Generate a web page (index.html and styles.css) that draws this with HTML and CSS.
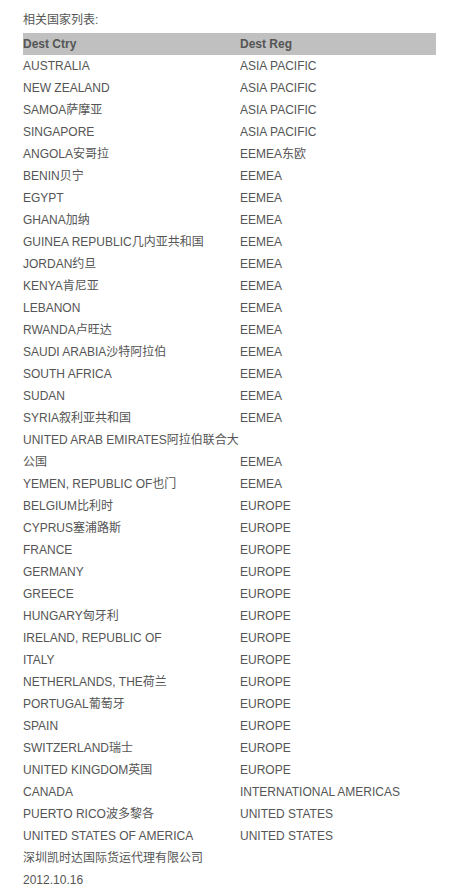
FILE: index.html
```html
<!DOCTYPE html>
<html lang="zh-CN">
<head>
    <meta charset="UTF-8">
    <meta name="viewport" content="width=device-width, initial-scale=1.0">
    <title>相关国家列表</title>
    <link rel="stylesheet" href="styles.css">
</head>
<body>
    <div class="content">
        <p class="title">相关国家列表:</p>

        <table class="country-table">
            <thead>
                <tr>
                    <th class="col-ctry">Dest Ctry</th>
                    <th>Dest Reg</th>
                </tr>
            </thead>
            <tbody>
                <tr><td>AUSTRALIA</td><td>ASIA PACIFIC</td></tr>
                <tr><td>NEW ZEALAND</td><td>ASIA PACIFIC</td></tr>
                <tr><td>SAMOA萨摩亚</td><td>ASIA PACIFIC</td></tr>
                <tr><td>SINGAPORE</td><td>ASIA PACIFIC</td></tr>
                <tr><td>ANGOLA安哥拉</td><td>EEMEA东欧</td></tr>
                <tr><td>BENIN贝宁</td><td>EEMEA</td></tr>
                <tr><td>EGYPT</td><td>EEMEA</td></tr>
                <tr><td>GHANA加纳</td><td>EEMEA</td></tr>
                <tr><td>GUINEA REPUBLIC几内亚共和国</td><td>EEMEA</td></tr>
                <tr><td>JORDAN约旦</td><td>EEMEA</td></tr>
                <tr><td>KENYA肯尼亚</td><td>EEMEA</td></tr>
                <tr><td>LEBANON</td><td>EEMEA</td></tr>
                <tr><td>RWANDA卢旺达</td><td>EEMEA</td></tr>
                <tr><td>SAUDI ARABIA沙特阿拉伯</td><td>EEMEA</td></tr>
                <tr><td>SOUTH AFRICA</td><td>EEMEA</td></tr>
                <tr><td>SUDAN</td><td>EEMEA</td></tr>
                <tr><td>SYRIA叙利亚共和国</td><td>EEMEA</td></tr>
                <tr><td>UNITED ARAB EMIRATES阿拉伯联合大<br>公国</td><td>EEMEA</td></tr>
                <tr><td>YEMEN, REPUBLIC OF也门</td><td>EEMEA</td></tr>
                <tr><td>BELGIUM比利时</td><td>EUROPE</td></tr>
                <tr><td>CYPRUS塞浦路斯</td><td>EUROPE</td></tr>
                <tr><td>FRANCE</td><td>EUROPE</td></tr>
                <tr><td>GERMANY</td><td>EUROPE</td></tr>
                <tr><td>GREECE</td><td>EUROPE</td></tr>
                <tr><td>HUNGARY匈牙利</td><td>EUROPE</td></tr>
                <tr><td>IRELAND, REPUBLIC OF</td><td>EUROPE</td></tr>
                <tr><td>ITALY</td><td>EUROPE</td></tr>
                <tr><td>NETHERLANDS, THE荷兰</td><td>EUROPE</td></tr>
                <tr><td>PORTUGAL葡萄牙</td><td>EUROPE</td></tr>
                <tr><td>SPAIN</td><td>EUROPE</td></tr>
                <tr><td>SWITZERLAND瑞士</td><td>EUROPE</td></tr>
                <tr><td>UNITED KINGDOM英国</td><td>EUROPE</td></tr>
                <tr><td>CANADA</td><td>INTERNATIONAL AMERICAS</td></tr>
                <tr><td>PUERTO RICO波多黎各</td><td>UNITED STATES</td></tr>
                <tr><td>UNITED STATES OF AMERICA</td><td>UNITED STATES</td></tr>
            </tbody>
        </table>

        <p class="footer-line">深圳凯时达国际货运代理有限公司</p>
        <p class="footer-line">2012.10.16</p>
    </div>
</body>
</html>
```

FILE: styles.css
```css
* {
    box-sizing: border-box;
    margin: 0;
    padding: 0;
}

body {
    font-family: "Liberation Sans", Arial, "Noto Sans CJK SC", sans-serif;
    font-size: 12px;
    line-height: 22px;
    color: #555;
    background-color: #fff;
}

.content {
    width: 413px;
    margin-left: 23px;
    padding-top: 9px;
}

.title {
    margin-bottom: 2px;
}

.country-table {
    width: 413px;
    border-collapse: collapse;
    table-layout: fixed;
}

.country-table th,
.country-table td {
    padding: 0;
    text-align: left;
    vertical-align: bottom;
    white-space: nowrap;
}

.country-table th {
    height: 22px;
    font-weight: bold;
    background-color: #c0c0c0;
}

.country-table .col-ctry {
    width: 217px;
}

.country-table td {
    height: 22px;
}
```
